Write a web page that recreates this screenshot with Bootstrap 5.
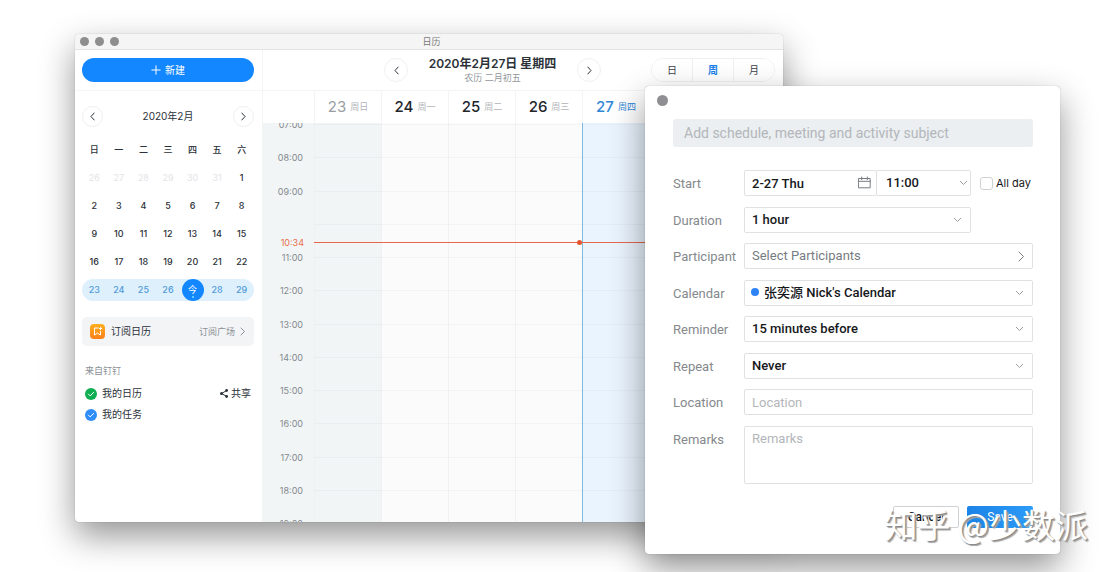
<!DOCTYPE html>
<html lang="zh-CN">
<head>
<meta charset="utf-8">
<meta name="viewport" content="width=device-width, initial-scale=1">
<title>日历</title>
<link href="https://cdn.jsdelivr.net/npm/bootstrap@5.3.0/dist/css/bootstrap.min.css" rel="stylesheet">
<style>
  body { font-family: Inter, "Noto Sans CJK SC", sans-serif; font-size: 10px; color: #2b3138; background: #fff; }
  svg { display: block; fill: none; stroke: currentColor; stroke-linecap: round; stroke-linejoin: round; }
  a { color: inherit; text-decoration: none; }
  .desktop { min-height: 100vh; padding: 34px 337px 50px 75px; overflow: hidden; }
  .win { background: #fff; border-radius: 4px; box-shadow: 0 0 1px rgba(0,0,0,.4), 0 14px 34px rgba(0,0,0,.42); }

  /* calendar window */
  .cal-win { height: calc(100vh - 84px); min-height: 420px; }
  .cal-clip { border-radius: 4px; overflow: hidden; }
  .cal-body { min-height: 0; }
  .titlebar { height: 16px; background: #f5f5f5; border-bottom: 1px solid #e3e3e3; color: #777; font-size: 9px; line-height: 15px; padding-left: 5px; }
  .lights { gap: 6px; padding: 3px 0 0 5px; }
  .light { width: 9px; height: 9px; border-radius: 50%; background: #8e8e8e; }
  .side { width: 188px; border-right: 1px solid #f3f4f5; }
  .side-head { height: 41px; padding: 8px 8px 0 7px; border-bottom: 1px solid #f5f6f7; }
  .side-body { padding: 15px 8px 0 7px; }
  .new-btn { height: 24px; background: #1287ff; color: #fff; border: 0; border-radius: 12px; font-size: 10px; padding: 0; }
  .new-btn:hover { background: #0a78ec; color: #fff; }
  .round-btn { border: 1px solid #eff0f1; border-radius: 50%; background: #fff; color: #2b3138; padding: 0; display: grid; place-items: center; }
  .r20 { width: 21px; height: 21px; }
  .r24 { width: 24px; height: 24px; }
  .month { width: 100%; table-layout: fixed; margin-top: 9px; font-size: 9px; font-weight: 500; text-align: center; }
  .month th, .month td { height: 28px; padding: 0; font-weight: 500; line-height: 22px; }
  .month .off { color: #e3e4e6; font-weight: 400; }
  .month .week span { display: block; height: 22px; background: #dff0fd; color: #4f9bd8; }
  .month .week td:first-child span { border-radius: 11px 0 0 11px; }
  .month .week td:last-child span { border-radius: 0 11px 11px 0; }
  .month .week b { display: block; position: relative; width: 22px; height: 22px; margin: 0 auto; border-radius: 50%; background: #1287ff; color: #fff; font-weight: 400; }
  .month .week b::after { content: ""; position: absolute; left: 10px; bottom: 3px; width: 2px; height: 2px; border-radius: 50%; background: #7fe0ff; }
  .sub-card { height: 29px; margin-top: 13px; padding: 0 8px; background: #f2f4f6; border-radius: 5px; color: #2b3138; }
  .sub-title { font-size: 10px; margin-left: 6px; }
  .sub-more { font-size: 9px; }
  .muted-txt { color: #8b9096; }
  .list-box { padding: 16px 3px 0 3px; }
  .group-name { font-size: 9px; line-height: 18px; margin-bottom: 3px; }
  .entry { height: 21px; }
  .entry label { margin-left: 5px; }
  .share-link { gap: 3px; }
  .tick { appearance: none; width: 12px; height: 12px; border-radius: 50%; margin: 0; background: center/12px url("data:image/svg+xml,%3Csvg xmlns='http://www.w3.org/2000/svg' viewBox='0 0 12 12'%3E%3Cpath d='M3.4 6.1l1.8 1.8 3.4-3.5' fill='none' stroke='%23fff' stroke-linecap='round'/%3E%3C/svg%3E"); }
  .tick.green { background-color: #10ae52; }
  .tick.blue { background-color: #2e8df7; }

  .main-head { height: 40px; padding-right: 8px; }
  .date-nav { width: 217px; margin-right: 50px; }
  .date-title { font-size: 12px; font-weight: 600; line-height: 16px; margin: 0; }
  .date-sub { font-size: 9px; line-height: 12px; color: #93979c; }
  .seg { width: 124px; border: 1px solid #eff0f1; border-radius: 12px; overflow: hidden; }
  .seg button { flex: 1; height: 22px; border: 0; background: #fff; padding: 0; color: #3c4147; }
  .seg button + button { border-left: 1px solid #eff0f1; }
  .seg .on { color: #1a7fe8; font-weight: 700; }
  .gutter { width: 51px; flex: none; }
  .day-head { height: 33px; border-top: 1px solid #f3f4f5; }
  .day-head .day { flex: 1; border-left: 1px solid #f3f4f5; color: #b1b4b8; font-size: 9px; }
  .day-head strong { font-size: 15px; font-weight: 500; color: #22262b; }
  .day-head .past strong { color: #9a9ea3; font-weight: 400; }
  .day-head .now, .day-head .now strong { color: #2e86d6; }
  .board { position: relative; overflow: hidden; background: #fbfbfb; min-height: 0; }
  .cols { position: absolute; inset: 0; }
  .cols .gutter { background: #f1f5f6; }
  .cols i { flex: 1; border-left: 1px solid #eff1f2; }
  .cols .past { background: #f1f5f6; }
  .cols .now { background: #eaf4fe; border-left-color: #7dbbe0; }
  .hours { position: absolute; inset: 1px 0 -1px; margin: 0; }
  .hours li { flex: 1 1 0; min-height: 0; color: #85898e; font-size: 9px; line-height: 12px; }
  .hours li.end { flex: 0 0 0; height: 0; }
  .hours time { width: 51px; padding-right: 11px; text-align: right; height: 12px; margin-top: -5px; }
  .hours li::after { content: ""; flex: 1; border-top: 1px solid rgba(90,120,130,.05); }
  .now-line { position: absolute; left: 0; right: 0; height: 0; color: #e86f4d; font-size: 9px; line-height: 12px; }
  .now-line time { width: 51px; padding-right: 10px; text-align: right; }
  .now-line hr { flex: 1; margin: 0; border: 0; border-top: 1px solid #e5684b; opacity: 1; position: relative; overflow: visible; }
  .now-line hr::after { content: ""; position: absolute; left: calc(400% / 7 - 5px); top: -3px; width: 5px; height: 5px; border-radius: 50%; background: #e3542f; }

  /* schedule dialog */
  .dlg { position: absolute; top: 86px; right: 60px; width: 415px; padding: 9px 27px 26px 28px; font-family: Roboto, "Noto Sans CJK SC", sans-serif; font-size: 13px; }
  .dlg .light { width: 11px; height: 11px; margin-left: -16px; background: #8e8e93; display: block; }
  .field { height: 26px; width: 100%; border: 1px solid #dfe1e3; border-radius: 2px; background-color: #fff; color: #16181b; padding: 0 7px; font-size: 13px; font-weight: 500; line-height: 24px; outline: 0; }
  .field::placeholder, .subject::placeholder { color: #b3b6ba; font-weight: 400; opacity: 1; }
  .field:focus { border-color: #1287ff; }
  select.field { appearance: none; background: no-repeat right 8px center/9px 6px url("data:image/svg+xml,%3Csvg xmlns='http://www.w3.org/2000/svg' viewBox='0 0 9 6'%3E%3Cpath d='M1 1l3.5 3.5L8 1' fill='none' stroke='%239a9ea3'/%3E%3C/svg%3E"); }
  select.tight { background-position: right 2px center; padding-left: 9px; }
  .subject { height: 28px; width: 100%; border: 0; border-radius: 3px; background: #ebeff1; padding: 0 11px; margin-top: 13px; font-size: 14px; outline: 0; }
  .rows { margin-top: 23px; min-height: 314px; }
  .rows .lbl { width: 71px; flex: none; color: #85898d; line-height: 26px; padding-top: 1px; height: 26px; }
  .date-box { width: 133px; }
  .time-box { width: 95px; margin-left: -1px; }
  .dur-box { width: 227px; }
  .pick { color: #777c82; font-weight: 400; }
  .dotted { padding-left: 19px; }
  .note { height: 58px; resize: none; }
  .acts { margin-top: 22px; }
  .over-right { position: absolute; right: 6px; top: 6px; color: #777c82; }
  .over-left { position: absolute; left: 7px; top: 8px; width: 8px; height: 8px; border-radius: 50%; background: #2e83f6; }
  .allday { appearance: none; width: 13px; height: 13px; border: 1px solid #cfd2d5; border-radius: 3px; margin: 0 3px 0 9px; background: #fff; }
  .allday:checked { background: #1287ff; }
  .allday-lbl { font-family: Inter, sans-serif; font-size: 11px; color: #16181b; }
  .act { width: 66px; height: 22px; padding: 0; font-size: 12px; border-radius: 2px; line-height: 20px; }
  .act.cancel { border: 1px solid #cfd2d5; background: #fff; color: #16181b; font-weight: 500; }
  .act.save { border: 0; background: linear-gradient(90deg, #1c83e6, #2c9bf8); color: #fff; }
  .stamp { position: absolute; right: 32px; top: 500px; font-family: "Noto Sans CJK SC", sans-serif; font-size: 33px; line-height: 48px; color: #fff; text-shadow: 1px 1px 1px #888, 2px 2px 1px #aaa; pointer-events: none; white-space: nowrap; }
</style>
</head>
<body>
<div class="desktop position-relative">

<section class="win cal-win">
 <div class="cal-clip d-flex flex-column h-100">
  <header class="titlebar position-relative text-center flex-shrink-0">
    <div class="lights d-flex position-absolute top-0 start-0"><span class="light"></span><span class="light"></span><span class="light"></span></div>
    日历
  </header>
  <div class="cal-body d-flex flex-grow-1">
    <aside class="side flex-shrink-0">
      <div class="side-head">
        <button class="btn new-btn w-100 d-flex align-items-center justify-content-center gap-1" type="button"><svg width="10" height="10" viewBox="0 0 10 10"><path d="M5 .8v8.4M.8 5h8.4"/></svg>新建</button>
      </div>
      <div class="side-body">
        <div class="d-flex align-items-center justify-content-between">
          <button class="round-btn r20" type="button" aria-label="上个月"><svg width="5" height="9" viewBox="0 0 5 9"><path d="M4.2 1L1 4.5 4.2 8"/></svg></button>
          <span>2020年2月</span>
          <button class="round-btn r20" type="button" aria-label="下个月"><svg width="5" height="9" viewBox="0 0 5 9"><path d="M.8 1L4 4.5.8 8"/></svg></button>
        </div>
        <table class="month">
          <thead><tr><th>日</th><th>一</th><th>二</th><th>三</th><th>四</th><th>五</th><th>六</th></tr></thead>
          <tbody>
            <tr><td class="off">26</td><td class="off">27</td><td class="off">28</td><td class="off">29</td><td class="off">30</td><td class="off">31</td><td>1</td></tr>
            <tr><td>2</td><td>3</td><td>4</td><td>5</td><td>6</td><td>7</td><td>8</td></tr>
            <tr><td>9</td><td>10</td><td>11</td><td>12</td><td>13</td><td>14</td><td>15</td></tr>
            <tr><td>16</td><td>17</td><td>18</td><td>19</td><td>20</td><td>21</td><td>22</td></tr>
            <tr class="week"><td><span>23</span></td><td><span>24</span></td><td><span>25</span></td><td><span>26</span></td><td><span><b>今</b></span></td><td><span>28</span></td><td><span>29</span></td></tr>
          </tbody>
        </table>
        <a href="#" class="sub-card d-flex align-items-center">
          <svg width="15" height="15" viewBox="0 0 15 15"><defs><linearGradient id="og" x2="0" y2="1"><stop stop-color="#ffb01f"/><stop offset="1" stop-color="#fb7f1c"/></linearGradient></defs><rect width="15" height="15" rx="4" fill="url(#og)" stroke="none"/><path stroke="#fff" d="M8 4H4.5v7l3-1.8 3 1.8V7.5M10.5 3.3v2.4M9.3 4.5h2.4"/></svg>
          <span class="sub-title">订阅日历</span>
          <span class="sub-more ms-auto muted-txt">订阅广场</span>
          <svg class="ms-1 muted-txt" width="7" height="9" viewBox="0 0 7 9"><path d="M2 1l3.5 3.5L2 8"/></svg>
        </a>
        <div class="list-box">
          <div class="muted-txt group-name">来自钉钉</div>
          <div class="d-flex align-items-center entry"><input class="tick green" type="checkbox" id="mine" checked><label for="mine">我的日历</label>
            <a href="#" class="share-link ms-auto d-flex align-items-center"><svg width="8" height="9" viewBox="0 0 8 9"><path d="M6.5 1.6L1.6 4.5l4.9 2.9"/><g fill="currentColor" stroke="none"><circle cx="6.6" cy="1.5" r="1.4"/><circle cx="1.5" cy="4.5" r="1.5"/><circle cx="6.6" cy="7.5" r="1.4"/></g></svg>共享</a></div>
          <div class="d-flex align-items-center entry"><input class="tick blue" type="checkbox" id="tasks" checked><label for="tasks">我的任务</label></div>
        </div>
      </div>
    </aside>

    <main class="flex-grow-1 d-flex flex-column">
      <div class="main-head d-flex align-items-center justify-content-end flex-shrink-0">
        <div class="date-nav d-flex align-items-center justify-content-between">
          <button class="round-btn r24" type="button" aria-label="上一周"><svg width="5" height="9" viewBox="0 0 5 9"><path d="M4.2 1L1 4.5 4.2 8"/></svg></button>
          <div class="text-center text-nowrap"><h1 class="date-title">2020年2月27日 星期四</h1><div class="date-sub">农历 二月初五</div></div>
          <button class="round-btn r24" type="button" aria-label="下一周"><svg width="5" height="9" viewBox="0 0 5 9"><path d="M.8 1L4 4.5.8 8"/></svg></button>
        </div>
        <div class="seg d-flex"><button type="button">日</button><button type="button" class="on">周</button><button type="button">月</button></div>
      </div>
      <div class="day-head d-flex flex-shrink-0">
        <span class="gutter"></span>
        <div class="day past d-flex align-items-center justify-content-center gap-1"><strong>23</strong>周日</div>
        <div class="day d-flex align-items-center justify-content-center gap-1"><strong>24</strong>周一</div>
        <div class="day d-flex align-items-center justify-content-center gap-1"><strong>25</strong>周二</div>
        <div class="day d-flex align-items-center justify-content-center gap-1"><strong>26</strong>周三</div>
        <div class="day now d-flex align-items-center justify-content-center gap-1"><strong>27</strong>周四</div>
        <div class="day"></div><div class="day"></div>
      </div>
      <div class="board flex-grow-1">
        <div class="cols d-flex"><span class="gutter"></span><i class="past"></i><i></i><i></i><i></i><i class="now"></i><i></i><i></i></div>
        <ol class="hours list-unstyled d-flex flex-column">
          <li class="d-flex"><time>07:00</time></li><li class="d-flex"><time>08:00</time></li><li class="d-flex"><time>09:00</time></li><li class="d-flex"><time></time></li>
          <li class="d-flex"><time>11:00</time></li><li class="d-flex"><time>12:00</time></li><li class="d-flex"><time>13:00</time></li><li class="d-flex"><time>14:00</time></li>
          <li class="d-flex"><time>15:00</time></li><li class="d-flex"><time>16:00</time></li><li class="d-flex"><time>17:00</time></li><li class="d-flex"><time>18:00</time></li>
          <li class="d-flex end"><time>19:00</time></li>
        </ol>
        <div class="now-line d-flex align-items-center" style="top:30%"><time>10:34</time><hr></div>
      </div>
    </main>
  </div>
 </div>
</section>

<form class="win dlg" onsubmit="return false">
  <span class="light"></span>
  <input class="subject" type="text" placeholder="Add schedule, meeting and activity subject" aria-label="Subject">
  <div class="rows d-flex flex-column justify-content-between">
    <div class="d-flex align-items-center"><label class="lbl" for="start">Start</label>
      <div class="date-box position-relative"><input class="field" id="start" type="text" value="2-27 Thu"><svg class="over-right" width="13" height="13" viewBox="0 0 13 13"><path d="M.8 2.5h11.4v9.3H.8zM.8 5.3h11.4M3.7 1v2.6M9.3 1v2.6"/></svg></div>
      <div class="time-box"><select class="field tight" aria-label="Start time"><option>11:00</option></select></div>
      <input class="allday" type="checkbox" id="allday"><label class="allday-lbl text-nowrap" for="allday">All day</label></div>
    <div class="d-flex"><label class="lbl" for="dur">Duration</label><div class="dur-box"><select class="field" id="dur"><option>1 hour</option></select></div></div>
    <div class="d-flex"><label class="lbl" for="part">Participant</label><button id="part" type="button" class="field pick d-flex align-items-center justify-content-between">Select Participants<svg width="7" height="11" viewBox="0 0 7 11"><path d="M1 1l4.5 4.5L1 10"/></svg></button></div>
    <div class="d-flex"><label class="lbl" for="calsel">Calendar</label><div class="position-relative flex-grow-1"><select class="field dotted" id="calsel"><option>张奕源 Nick's Calendar</option></select><span class="over-left"></span></div></div>
    <div class="d-flex"><label class="lbl" for="rem">Reminder</label><select class="field" id="rem"><option>15 minutes before</option></select></div>
    <div class="d-flex"><label class="lbl" for="rep">Repeat</label><select class="field" id="rep"><option>Never</option></select></div>
    <div class="d-flex"><label class="lbl" for="loc">Location</label><input class="field" id="loc" type="text" placeholder="Location"></div>
    <div class="d-flex"><label class="lbl" for="note">Remarks</label><textarea class="field note" id="note" placeholder="Remarks"></textarea></div>
  </div>
  <div class="d-flex justify-content-end gap-2 acts"><button class="act cancel" type="button">Cancel</button><button class="act save" type="submit">Save</button></div>
</form>
<div class="stamp">知乎 @少数派</div>
</div>
<script src="https://cdn.jsdelivr.net/npm/bootstrap@5.3.0/dist/js/bootstrap.bundle.min.js"></script>
</body>
</html>
